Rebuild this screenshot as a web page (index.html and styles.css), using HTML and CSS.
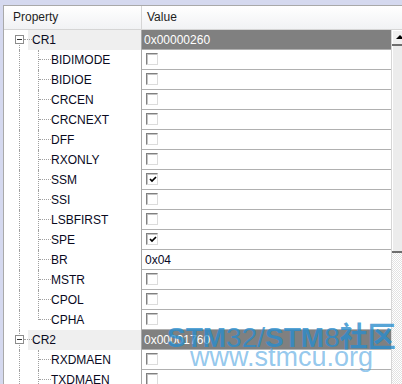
FILE: index.html
```html
<!DOCTYPE html>
<html lang="en">
<head>
    <meta charset="UTF-8">
    <title>Register Properties</title>
    <link rel="stylesheet" href="styles.css">
</head>
<body>
    <div class="pane">
        <div class="head">
            <div class="hcell prop-h">Property</div>
            <div class="hcell val-h">Value</div>
        </div>
        <div class="body">
            <div class="grid">
                <div class="row cat first">
                    <div class="prop"><span class="exp"><span class="box"></span></span><span class="name">CR1</span></div>
                    <div class="val">0x00000260</div>
                </div>
                <div class="row">
                    <div class="prop"><span class="exp"></span><span class="branch"></span><span class="name">BIDIMODE</span></div>
                    <div class="val"><span class="chk"></span></div>
                </div>
                <div class="row">
                    <div class="prop"><span class="exp"></span><span class="branch"></span><span class="name">BIDIOE</span></div>
                    <div class="val"><span class="chk"></span></div>
                </div>
                <div class="row">
                    <div class="prop"><span class="exp"></span><span class="branch"></span><span class="name">CRCEN</span></div>
                    <div class="val"><span class="chk"></span></div>
                </div>
                <div class="row">
                    <div class="prop"><span class="exp"></span><span class="branch"></span><span class="name">CRCNEXT</span></div>
                    <div class="val"><span class="chk"></span></div>
                </div>
                <div class="row">
                    <div class="prop"><span class="exp"></span><span class="branch"></span><span class="name">DFF</span></div>
                    <div class="val"><span class="chk"></span></div>
                </div>
                <div class="row">
                    <div class="prop"><span class="exp"></span><span class="branch"></span><span class="name">RXONLY</span></div>
                    <div class="val"><span class="chk"></span></div>
                </div>
                <div class="row">
                    <div class="prop"><span class="exp"></span><span class="branch"></span><span class="name">SSM</span></div>
                    <div class="val"><span class="chk on"><svg width="8" height="7" viewBox="0 0 8 7"><path d="M1 3 L3 5 L7 1" fill="none" stroke="#000" stroke-width="1.7"/></svg></span></div>
                </div>
                <div class="row">
                    <div class="prop"><span class="exp"></span><span class="branch"></span><span class="name">SSI</span></div>
                    <div class="val"><span class="chk"></span></div>
                </div>
                <div class="row">
                    <div class="prop"><span class="exp"></span><span class="branch"></span><span class="name">LSBFIRST</span></div>
                    <div class="val"><span class="chk"></span></div>
                </div>
                <div class="row">
                    <div class="prop"><span class="exp"></span><span class="branch"></span><span class="name">SPE</span></div>
                    <div class="val"><span class="chk on"><svg width="8" height="7" viewBox="0 0 8 7"><path d="M1 3 L3 5 L7 1" fill="none" stroke="#000" stroke-width="1.7"/></svg></span></div>
                </div>
                <div class="row">
                    <div class="prop"><span class="exp"></span><span class="branch"></span><span class="name">BR</span></div>
                    <div class="val">0x04</div>
                </div>
                <div class="row">
                    <div class="prop"><span class="exp"></span><span class="branch"></span><span class="name">MSTR</span></div>
                    <div class="val"><span class="chk"></span></div>
                </div>
                <div class="row">
                    <div class="prop"><span class="exp"></span><span class="branch"></span><span class="name">CPOL</span></div>
                    <div class="val"><span class="chk"></span></div>
                </div>
                <div class="row">
                    <div class="prop"><span class="exp"></span><span class="branch last"></span><span class="name">CPHA</span></div>
                    <div class="val"><span class="chk"></span></div>
                </div>
                <div class="row cat">
                    <div class="prop"><span class="exp"><span class="box"></span></span><span class="name">CR2</span></div>
                    <div class="val">0x00001760</div>
                </div>
                <div class="row">
                    <div class="prop"><span class="exp"></span><span class="branch"></span><span class="name">RXDMAEN</span></div>
                    <div class="val"><span class="chk"></span></div>
                </div>
                <div class="row">
                    <div class="prop"><span class="exp"></span><span class="branch"></span><span class="name">TXDMAEN</span></div>
                    <div class="val"><span class="chk"></span></div>
                </div>
            </div>
            <div class="vscroll">
                <div class="sb-btn"><span class="arrow"></span></div>
                <div class="sb-thumb"></div>
                <div class="sb-track"></div>
            </div>
        </div>
        <div class="watermark">
            <div class="wm-title"><b>STM</b>32/<b>STM</b>8<b>社区</b></div>
            <div class="wm-url">www.stmcu.org</div>
        </div>
    </div>
</body>
</html>
```

FILE: styles.css
```css
html, body {
    margin: 0;
    height: 100%;
    overflow: hidden;
}
body {
    background-color: #d5d9ef;
    font-family: "Liberation Sans", Arial, sans-serif;
    font-size: 12px;
    color: #000;
}
.pane {
    position: relative;
    margin: 5px 0 0 3px;
    width: 404px;
    height: calc(100% - 6px);
    border-top: 1px solid #a9a9a9;
    border-left: 1px solid #a9a9a9;
    background-color: #fff;
}
.head {
    display: flex;
    height: 23px;
    border-bottom: 1px solid #d5d5d5;
    background: linear-gradient(#fff, #f1f2f4);
    line-height: 23px;
    color: #1e1e1e;
}
.prop-h {
    width: 128px;
    padding-left: 9px;
    border-right: 1px solid #d5d5d5;
}
.val-h {
    padding-left: 5px;
}
.body {
    display: flex;
}
.grid {
    width: 387px;
}
.row {
    display: flex;
    height: 20px;
}
.prop {
    display: flex;
    width: 137px;
    flex: none;
}
.name {
    line-height: 20px;
    white-space: nowrap;
    color: #0a0a1e;
}
.cat .name {
    flex: 1;
    padding-left: 4px;
    background-color: #efefef;
}
.val {
    display: flex;
    align-items: center;
    box-sizing: border-box;
    width: 250px;
    padding-left: 3px;
    border-left: 1px solid #a8a8a8;
    border-bottom: 1px solid #b0b0b0;
    color: #0a0a28;
}
.cat .val {
    padding-left: 2px;
    background-color: #808080;
    color: #fff;
}

/* tree connectors */
.exp, .branch {
    position: relative;
    flex: none;
}
.exp {
    width: 24px;
}
.branch {
    width: 23px;
}
.exp::before {
    content: "";
    position: absolute;
    left: 15px;
    top: 0;
    bottom: 0;
    border-left: 1px dotted #a0a0a0;
}
.first .exp::before {
    top: 10px;
}
.cat .exp::after {
    content: "";
    position: absolute;
    left: 20px;
    top: 9px;
    width: 8px;
    border-top: 1px dotted #a0a0a0;
}
.box {
    position: absolute;
    left: 11px;
    top: 5px;
    width: 7px;
    height: 7px;
    border: 1px solid #8c8c8c;
    background-color: #fff;
    z-index: 1;
}
.box::before {
    content: "";
    position: absolute;
    left: 1px;
    top: 3px;
    width: 5px;
    height: 1px;
    background-color: #333;
}
.branch::before {
    content: "";
    position: absolute;
    left: 10px;
    top: 0;
    bottom: 0;
    border-left: 1px dotted #a0a0a0;
}
.branch.last::before {
    bottom: 10px;
}
.branch::after {
    content: "";
    position: absolute;
    left: 11px;
    right: 0;
    top: 9px;
    border-top: 1px dotted #a0a0a0;
}

/* checkbox */
.chk {
    display: flex;
    align-items: center;
    justify-content: center;
    box-sizing: border-box;
    width: 12px;
    height: 12px;
    margin: 0 0 2px 1px;
    border: 1px solid;
    border-color: #808080 #dcdcdc #dcdcdc #808080;
    box-shadow: inset 1px 1px 0 #c4c4c4;
    background-color: #fff;
}
.chk svg {
    display: block;
    margin: 1px 0 0 1px;
}

/* scrollbar */
.vscroll {
    display: flex;
    flex-direction: column;
    width: 17px;
    height: 360px;
    border-left: 1px solid #d6d6d6;
}
.sb-btn {
    height: 14px;
    border-bottom: 2px solid #6e6e6e;
    background-color: #f0f0f0;
    box-shadow: inset 1px 1px 0 #fff;
}
.arrow {
    display: block;
    width: 0;
    height: 0;
    margin: 5px auto 0;
    border-left: 4px solid transparent;
    border-right: 4px solid transparent;
    border-bottom: 4px solid #000;
}
.sb-thumb {
    height: 205px;
    border-bottom: 2px solid #6e6e6e;
    background-color: #ececec;
    box-shadow: inset 1px 0 0 #fff;
}
.sb-track {
    flex: 1;
    background: repeating-conic-gradient(#e2e2e2 0 25%, #fff 0 50%) 0 0 / 2px 2px;
}

/* overlay watermark */
.watermark {
    position: absolute;
    left: 163px;
    top: 317px;
    white-space: nowrap;
    pointer-events: none;
}
.wm-title {
    font-family: "Liberation Sans", "Noto Sans CJK SC", sans-serif;
    font-size: 28px;
    line-height: 29px;
    color: rgba(40, 140, 205, 0.8);
}
.wm-title b {
    font-weight: bold;
}
.wm-url {
    margin: -8px 0 0 23px;
    font-family: "Liberation Sans", sans-serif;
    font-size: 27px;
    line-height: 27px;
    color: rgba(80, 165, 225, 0.62);
}
```
